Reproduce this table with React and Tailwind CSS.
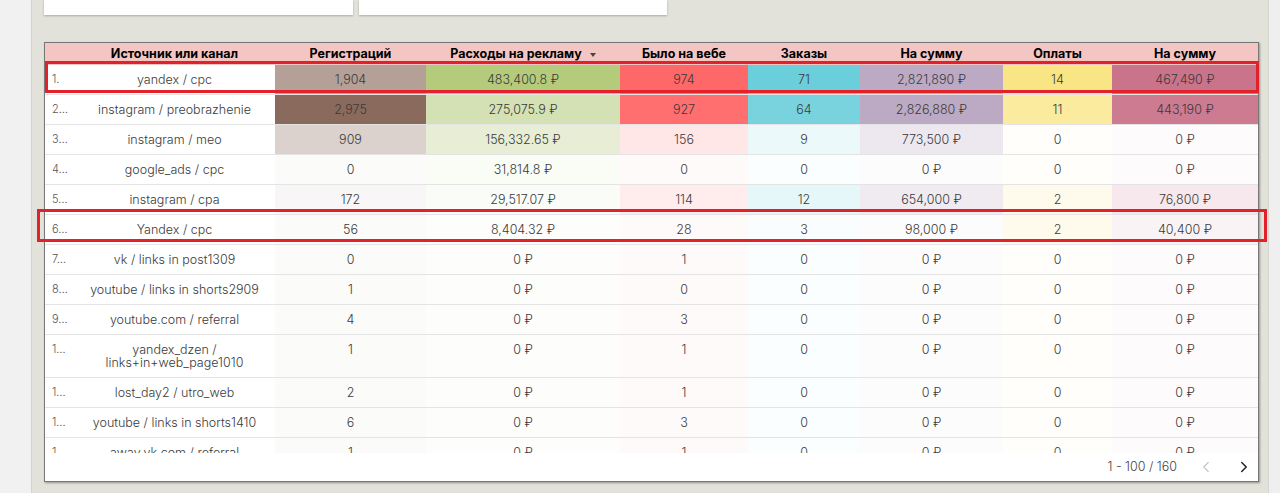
import ChevronLeft from "lucide-react/dist/esm/icons/chevron-left";
import ChevronRight from "lucide-react/dist/esm/icons/chevron-right";

// heatmap bases per metric column, max taken from the data below
const COLS = [
 { key: "reg", label: "Регистраций", base: "#8a6a5c" },
 { key: "spend", label: "Расходы на рекламу", base: "#b4cb7c", sorted: true, money: true },
 { key: "web", label: "Было на вебе", base: "#ff6868" },
 { key: "orders", label: "Заказы", base: "#6acedb" },
 { key: "sum", label: "На сумму", base: "#bcaac4", money: true },
 { key: "pay", label: "Оплаты", base: "#f9e583" },
 { key: "paid", label: "На сумму", base: "#c9748b", money: true },
];

const ROWS = [
 ["1.", "yandex / cpc", 1904, "483,400.8", 974, 71, "2,821,890", 14, "467,490"],
 ["2…", "instagram / preobrazhenie", 2975, "275,075.9", 927, 64, "2,826,880", 11, "443,190"],
 ["3…", "instagram / meo", 909, "156,332.65", 156, 9, "773,500", 0, "0"],
 ["4…", "google_ads / cpc", 0, "31,814.8", 0, 0, "0", 0, "0"],
 ["5…", "instagram / cpa", 172, "29,517.07", 114, 12, "654,000", 2, "76,800"],
 ["6…", "Yandex / cpc", 56, "8,404.32", 28, 3, "98,000", 2, "40,400"],
 ["7…", "vk / links in post1309", 0, "0", 1, 0, "0", 0, "0"],
 ["8…", "youtube / links in shorts2909", 1, "0", 0, 0, "0", 0, "0"],
 ["9…", "youtube.com / referral", 4, "0", 3, 0, "0", 0, "0"],
 ["1…", "yandex_dzen / links+in+web_page1010", 1, "0", 1, 0, "0", 0, "0"],
 ["1…", "lost_day2 / utro_web", 2, "0", 1, 0, "0", 0, "0"],
 ["1…", "youtube / links in shorts1410", 6, "0", 3, 0, "0", 0, "0"],
 ["1", "away.vk.com / referral", 1, "0", 1, 0, "0", 0, "0"],
];

const num = (v) => (typeof v === "number" ? v : Number(String(v).replace(/,/g, "")));
const fmt = (v) => (typeof v === "number" ? v.toLocaleString("en-US") : v);

const MAX = COLS.map((_, i) => Math.max(...ROWS.map((r) => num(r[i + 2]))));

function heat(hex, t) {
 const k = Math.max(0.03, t);
 const c = [1, 3, 5].map((i) => parseInt(hex.slice(i, i + 2), 16));
 const [r, g, b] = c.map((x) => Math.round(255 + (x - 255) * k));
 return `rgb(${r},${g},${b})`;
}

const GRID = "grid grid-cols-[29px_201px_151px_194px_128px_112px_143px_109px_146px]";

function SortCaret() {
 return (
 <svg width="6" height="4" viewBox="0 0 6 4" className="ml-[8px] mt-[1px]">
 <path d="M0 0h6L3 4z" fill="#444" />
 </svg>
 );
}

export default function App() {
 return (
 <div className="relative w-[1280px] h-[493px] overflow-hidden flex bg-[#f1f1f1] font-['Inter','Noto_Sans',sans-serif]">
 <div className="w-[32px] shrink-0 bg-[#f1f1f1] border-r border-[#d3d3cc]" />

 <div className="flex-1 bg-[#e2e2da] pl-[12px] pr-[7px]">
 {/* top cards, cut off by the viewport */}
 <div className="flex gap-[6px]">
 <div className="w-[309px] h-[15px] bg-white shadow-[0_1px_2px_rgba(0,0,0,0.25)]" />
 <div className="w-[308px] h-[15px] bg-white shadow-[0_1px_2px_rgba(0,0,0,0.25)]" />
 </div>

 {/* table */}
 <div className="mt-[27px] w-[1215px] border border-[#777] bg-white shadow-[1px_1px_2px_rgba(0,0,0,0.35)]">
 <div className={`${GRID} h-[22px] bg-[#f4c6c3] text-[12.5px] font-bold text-black leading-[22px]`}>
 <div />
 <div className="text-center">Источник или канал</div>
 {COLS.map((c) => (
 <div key={c.key} className="flex items-center justify-center">
 {c.label}
 {c.sorted && <SortCaret />}
 </div>
 ))}
 </div>

 <div className="h-[388px] overflow-hidden">
 {ROWS.map((r, ri) => (
 <div key={ri} className={`${GRID} border-b border-[#e4e4e4] text-[12.5px] font-light text-[#3a3a3a] leading-[13px]`}>
 <div className="pl-[7px] py-[8px] text-[11px] text-[#555]">{r[0]}</div>
 <div className="px-[6px] py-[8px] text-center">{r[1]}</div>
 {COLS.map((c, ci) => {
 const v = r[ci + 2];
 return (
 <div
 key={c.key}
 className="px-1 py-[8px] text-center"
 style={{ backgroundColor: heat(c.base, MAX[ci] ? num(v) / MAX[ci] : 0) }}
 >
 {fmt(v)}
 {c.money && " ₽"}
 </div>
 );
 })}
 </div>
 ))}
 </div>

 <div className="h-[28px] flex items-center justify-end pr-[5px] text-[12.5px] font-light text-[#444]">
 <span>1 - 100 / 160</span>
 <ChevronLeft className="ml-[20px] w-[18px] h-[18px] text-[#c4c4c4]" strokeWidth={1.5} />
 <ChevronRight className="ml-[20px] w-[18px] h-[18px] text-[#222]" strokeWidth={2} />
 </div>
 </div>
 </div>

 <div className="w-[12px] shrink-0 bg-[#efefef] border-l border-[#d6d6d0]" />

 {/* red highlight annotations drawn over the table */}
 <div className="absolute left-[45px] top-[61px] w-[1214px] h-[32px] border-[3px] border-[#e2222a] pointer-events-none" />
 <div className="absolute left-[37px] top-[209px] w-[1230px] h-[33px] border-[3px] border-[#e2222a] pointer-events-none" />
 </div>
 );
}
